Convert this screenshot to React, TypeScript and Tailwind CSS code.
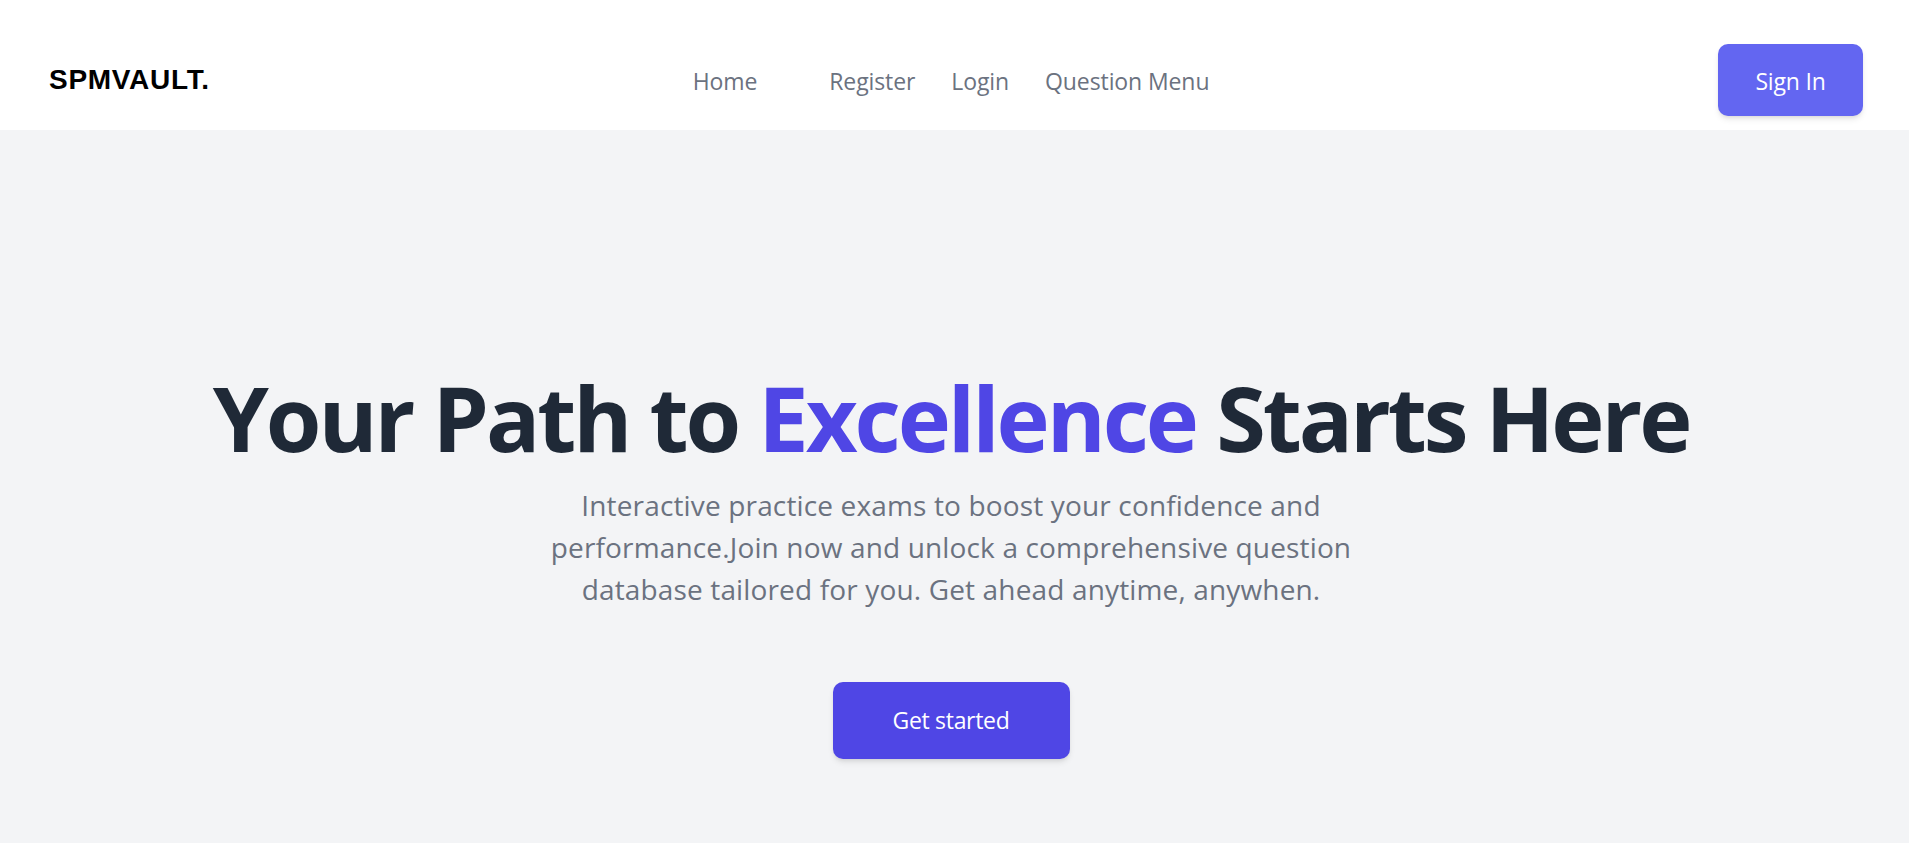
export default function App() {
  return (
    <div className="min-h-screen bg-[#f3f4f6] font-['Open_Sans',sans-serif]">
      <header className="h-[130px] bg-white flex items-center pt-[30px] pl-[49px] pr-[46px]">
        <div className="flex-1">
          <span className="font-['Liberation_Sans',Arial,sans-serif] font-bold text-[28px] leading-none tracking-[0.7px] text-black">
            SPMVAULT.
          </span>
        </div>
        <nav className="flex items-center mr-[10px] mt-[2px] text-[23px] tracking-[-0.1px] text-[#6b7280]">
          <a className="mr-[72px]">Home</a>
          <a className="mr-[36px]">Register</a>
          <a className="mr-[36px]">Login</a>
          <a>Question Menu</a>
        </nav>
        <div className="flex-1 flex justify-end">
          <button className="w-[145px] h-[72px] pt-[2px] rounded-[10px] bg-[#6366f1] text-white text-[23px] tracking-[-0.2px] shadow-md">
            Sign In
          </button>
        </div>
      </header>
      <main className="flex flex-col items-center pt-[242px] pr-[7px]">
        <h1 className="text-[90px] leading-[90px] font-bold text-[#1f2937] tracking-[-3.1px] whitespace-nowrap">
          Your Path to <span className="text-[#4f46e5]">Excellence</span> Starts Here
        </h1>
        <p className="mt-[22px] text-[28px] leading-[42px] text-[#6b7280] text-center tracking-[0.15px]">
          Interactive practice exams to boost your confidence and
          <br />
          performance.Join now and unlock a comprehensive question
          <br />
          database tailored for you. Get ahead anytime, anywhen.
        </p>
        <button className="mt-[72px] w-[237px] h-[77px] rounded-[10px] bg-[#4f46e5] text-white text-[23px] tracking-[-0.3px] shadow-md">
          Get started
        </button>
      </main>
    </div>
  );
}
